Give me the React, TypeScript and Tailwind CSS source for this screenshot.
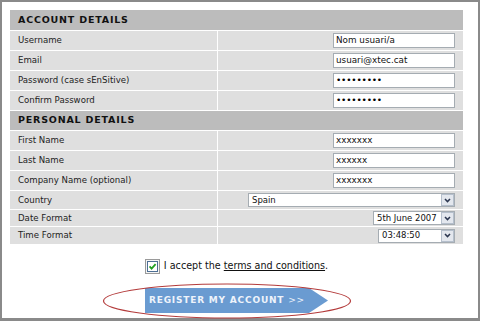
import React from "react";

const font = "font-['DejaVu_Sans',sans-serif]";

function Header({ title, first }: { title: string; first?: boolean }) {
  return (
    <div
      className={`flex h-[20px] items-center bg-[#bcbcbc] pl-2 ${first ? "h-[19px]" : "border-t border-white"}`}
    >
      <span className="text-[9.5px] font-bold tracking-[0.8px] text-[#111]">{title}</span>
    </div>
  );
}

function Row({ label, h = "h-[20px]", children }: { label: string; h?: string; children: React.ReactNode }) {
  return (
    <div className={`flex ${h} border-t border-white bg-[#dfdfdf]`}>
      <div className="flex w-[208px] items-center border-r border-white pl-2 text-[8.6px] text-[#222]">
        {label}
      </div>
      <div className="flex flex-1 items-center justify-end pr-2">{children}</div>
    </div>
  );
}

function Input({ value, pw }: { value: string; pw?: boolean }) {
  return (
    <div className="flex h-[15px] w-[122px] items-center border border-[#a5acb2] bg-white pl-[2px]">
      {pw ? (
        <span className="text-[9px] leading-none tracking-[-0.2px] text-black">•••••••••</span>
      ) : (
        <span className="text-[8.8px] leading-none text-[#111]">{value}</span>
      )}
    </div>
  );
}

function Select({ value, w }: { value: string; w: string }) {
  return (
    <div className={`flex h-[14px] ${w} items-center border border-[#a5acb2] bg-white`}>
      <span className="flex-1 pl-[3px] text-[8.5px] leading-none text-[#111]">{value}</span>
      <div className="flex h-[12px] w-[13px] items-center justify-center border border-[#b5bfcc] bg-[#e3e7ee]">
        <svg width="7" height="5" viewBox="0 0 7 5">
          <path d="M1 1 L3.5 3.6 L6 1" fill="none" stroke="#2b3650" strokeWidth="1.5" />
        </svg>
      </div>
    </div>
  );
}

export default function App() {
  return (
    <div
      className={`${font} box-border h-[321px] w-[480px] border-2 border-b-[3px] border-[#8a8a8a] bg-white pl-2 pr-[15px] pt-2`}
    >
      <div className="w-[453px]">
        <Header title="ACCOUNT DETAILS" first />
        <Row label="Username">
          <Input value="Nom usuari/a" />
        </Row>
        <Row label="Email">
          <Input value="usuari@xtec.cat" />
        </Row>
        <Row label="Password (case sEnSitive)">
          <Input value="" pw />
        </Row>
        <Row label="Confirm Password">
          <Input value="" pw />
        </Row>
        <Header title="PERSONAL DETAILS" />
        <Row label="First Name">
          <Input value="xxxxxxx" />
        </Row>
        <Row label="Last Name">
          <Input value="xxxxxx" />
        </Row>
        <Row label="Company Name (optional)">
          <Input value="xxxxxxx" />
        </Row>
        <Row label="Country" h="h-[19px]">
          <Select value="Spain" w="w-[207px]" />
        </Row>
        <Row label="Date Format" h="h-[17px]">
          <Select value="5th June 2007" w="w-[82px]" />
        </Row>
        <Row label="Time Format" h="h-[18px]">
          <Select value="03:48:50" w="w-[77px]" />
        </Row>
      </div>

      <div className="mt-[14px] flex h-[16px] w-[453px] items-center justify-center">
        <div className="flex h-[15px] w-[15px] items-center justify-center border border-[#9a9a9a] bg-[#f4f4f4]">
          <div className="flex h-[11px] w-[11px] items-center justify-center border border-[#4d6f94] bg-white">
            <svg width="9" height="9" viewBox="0 0 9 9">
              <path d="M1.6 4.4 L3.6 6.6 L7.6 2.2" fill="none" stroke="#22a022" strokeWidth="1.8" />
            </svg>
          </div>
        </div>
        <span className="ml-[4px] text-[9.6px] text-[#111]">
          I accept the <span className="underline">terms and conditions</span>.
        </span>
      </div>

      <div className="relative mt-[14px] flex h-[25px] w-[453px] justify-center">
        <div className="flex h-[25px]">
          <div className="flex h-[25px] w-[164px] items-center bg-[#6a9bd1] pl-[4px]">
            <span className="whitespace-nowrap text-[9px] font-bold tracking-[0.8px] text-[#eef3fb]">
              REGISTER MY ACCOUNT <span className="font-normal">&gt;&gt;</span>
            </span>
          </div>
          <svg width="19" height="25" viewBox="0 0 19 25" className="block">
            <path d="M0 0 L19 12.5 L0 25 Z" fill="#6a9bd1" />
          </svg>
        </div>
        <svg
          width="250"
          height="37"
          viewBox="0 0 250 37"
          className="pointer-events-none absolute left-[92px] top-[-5px]"
        >
          <ellipse cx="125" cy="18" rx="123.5" ry="17" fill="none" stroke="#b43c3c" strokeWidth="1.2" />
        </svg>
      </div>
    </div>
  );
}
